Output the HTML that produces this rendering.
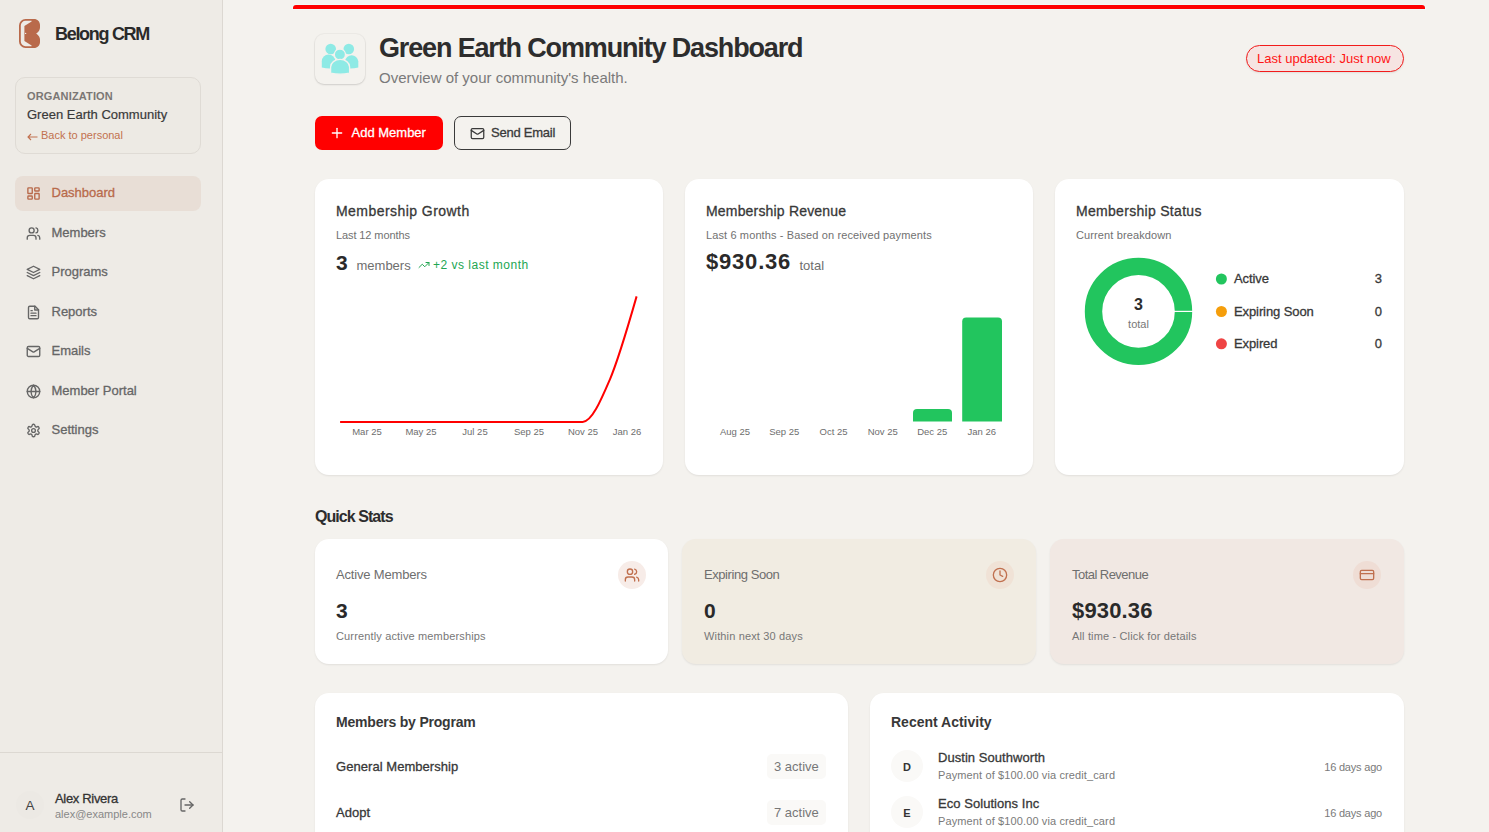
<!DOCTYPE html>
<html><head><meta charset="utf-8">
<style>
*{box-sizing:border-box;margin:0;padding:0}
html,body{width:1489px;height:832px;overflow:hidden}
body{font-family:"Liberation Sans",sans-serif;background:#F4F2EE;color:#2E2E2E;position:relative}
.abs{position:absolute;white-space:nowrap}
#side{position:absolute;left:0;top:0;width:223px;height:832px;background:#EEEBE6;border-right:1px solid #DCD8D2}
.brand{left:55px;top:24px;font-size:18px;font-weight:bold;letter-spacing:-1.3px;color:#2A2A2A}
.org{position:absolute;left:15px;top:77px;width:186px;height:77px;border:1px solid #DFDBD5;border-radius:10px;background:#EDEAE4}
.nav{position:absolute;left:15px;width:186px;height:35px;border-radius:8px}
.nav.active{background:#E8DED6}
.nav svg{position:absolute;left:10.5px;top:10px}
.nav span{-webkit-text-stroke:0.3px currentColor;position:absolute;left:36.5px;top:10px;font-size:13px;line-height:1;color:#666;white-space:nowrap}
.nav.active span{color:#B86A4B}
.card{position:absolute;background:#fff;border-radius:14px;box-shadow:0 1px 2px rgba(0,0,0,0.08)}

.t{position:absolute;white-space:nowrap;line-height:1}
.ct{font-size:14px;color:#383838;letter-spacing:0.3px}
.cs{font-size:11px;color:#717171;letter-spacing:0.12px}
.big{font-size:20px;font-weight:bold;color:#2A2A2A}
.lg{font-size:13px;color:#383838;letter-spacing:-0.1px}
.sl{font-size:13px;color:#6E6E6E;letter-spacing:-0.17px}
.sv{font-size:21px;font-weight:bold;color:#2A2A2A}
.sd{font-size:11px;color:#777;letter-spacing:0.15px}
.bt{font-size:14px;font-weight:bold;color:#383838;letter-spacing:-0.2px}
.pr{font-size:13px;color:#383838;letter-spacing:0.05px}
.ps{font-size:11px;color:#7A7A7A;letter-spacing:0.12px}
.av{width:32px;height:32px;border-radius:50%;background:#FAF9F7;text-align:center;line-height:34px;font-size:11px;font-weight:bold;color:#333}
.m{-webkit-text-stroke:0.3px currentColor}
</style></head><body>
<div id="side">
  <svg class="abs" style="left:19px;top:19px" width="22" height="30" viewBox="0 0 22 30">
    <path d="M14 0.9 H6.5 A5.6 5.6 0 0 0 0.9 6.5 V22.5 A5.6 5.6 0 0 0 6.5 28.1 H14" fill="none" stroke="#B96A4B" stroke-width="1.8"/>
    <path d="M5.4 7 L12.6 2.4 V0 H15 C18.4 0 21 2.6 21 6 V8.4 C21 10.6 19.8 12.6 17.2 14.5 C19.8 16.4 21 18.4 21 20.6 V23 C21 26.4 18.4 29 15 29 H12.6 V26.6 L5.4 22 Z" fill="#B96A4B"/>
    <circle cx="6.6" cy="14.4" r="0.7" fill="#EEEBE6"/>
  </svg>
  <div class="abs brand">Belong CRM</div>
  <div class="org">
    <div class="abs" style="left:11px;top:12px;font-size:11px;font-weight:bold;letter-spacing:0.15px;color:#7A7774">ORGANIZATION</div>
    <div class="abs" style="left:11px;top:29px;font-size:13px;color:#3A3A3A;-webkit-text-stroke:0.2px currentColor">Green Earth Community</div>
    <svg class="abs" style="left:11px;top:55px" width="11" height="8" viewBox="0 0 11 8"><path d="M10.5 4H1M4 1L1 4L4 7" fill="none" stroke="#C2714F" stroke-width="1.1"/></svg><div class="abs" style="left:25px;top:51px;font-size:11px;color:#C2714F">Back to personal</div>
  </div>
  <div class="nav active" style="top:176px">
    <svg width="15" height="15" viewBox="0 0 24 24" fill="none" stroke="#B86A4B" stroke-width="2.2" stroke-linecap="round" stroke-linejoin="round"><rect x="3" y="3" width="7" height="9" rx="1"/><rect x="14" y="3" width="7" height="5" rx="1"/><rect x="14" y="12" width="7" height="9" rx="1"/><rect x="3" y="16" width="7" height="5" rx="1"/></svg>
    <span>Dashboard</span>
  </div>
  <div class="nav" style="top:215.55px">
    <svg width="15" height="15" viewBox="0 0 24 24" fill="none" stroke="#666" stroke-width="2.2" stroke-linecap="round" stroke-linejoin="round"><path d="M16 21v-2a4 4 0 0 0-4-4H6a4 4 0 0 0-4 4v2"/><circle cx="9" cy="7" r="4"/><path d="M22 21v-2a4 4 0 0 0-3-3.87"/><path d="M16 3.13a4 4 0 0 1 0 7.75"/></svg>
    <span>Members</span>
  </div>
  <div class="nav" style="top:255.1px">
    <svg width="15" height="15" viewBox="0 0 24 24" fill="none" stroke="#666" stroke-width="2.2" stroke-linecap="round" stroke-linejoin="round"><path d="M12 2 2 7l10 5 10-5-10-5z"/><path d="m2 17 10 5 10-5"/><path d="m2 12 10 5 10-5"/></svg>
    <span>Programs</span>
  </div>
  <div class="nav" style="top:294.65px">
    <svg width="15" height="15" viewBox="0 0 24 24" fill="none" stroke="#666" stroke-width="2.2" stroke-linecap="round" stroke-linejoin="round"><path d="M14.5 2H6a2 2 0 0 0-2 2v16a2 2 0 0 0 2 2h12a2 2 0 0 0 2-2V7.5L14.5 2z"/><polyline points="14 2 14 8 20 8"/><line x1="16" y1="13" x2="8" y2="13"/><line x1="16" y1="17" x2="8" y2="17"/><line x1="10" y1="9" x2="8" y2="9"/></svg>
    <span>Reports</span>
  </div>
  <div class="nav" style="top:334.2px">
    <svg width="15" height="15" viewBox="0 0 24 24" fill="none" stroke="#666" stroke-width="2.2" stroke-linecap="round" stroke-linejoin="round"><rect x="2" y="4" width="20" height="16" rx="2"/><path d="m22 7-8.97 5.7a1.94 1.94 0 0 1-2.06 0L2 7"/></svg>
    <span>Emails</span>
  </div>
  <div class="nav" style="top:373.75px">
    <svg width="15" height="15" viewBox="0 0 24 24" fill="none" stroke="#666" stroke-width="2.2" stroke-linecap="round" stroke-linejoin="round"><circle cx="12" cy="12" r="10"/><path d="M12 2a14.5 14.5 0 0 0 0 20 14.5 14.5 0 0 0 0-20"/><path d="M2 12h20"/></svg>
    <span>Member Portal</span>
  </div>
  <div class="nav" style="top:413.3px">
    <svg width="15" height="15" viewBox="0 0 24 24" fill="none" stroke="#666" stroke-width="2.2" stroke-linecap="round" stroke-linejoin="round"><path d="M12.22 2h-.44a2 2 0 0 0-2 2v.18a2 2 0 0 1-1 1.73l-.43.25a2 2 0 0 1-2 0l-.15-.08a2 2 0 0 0-2.73.73l-.22.38a2 2 0 0 0 .73 2.73l.15.1a2 2 0 0 1 1 1.72v.51a2 2 0 0 1-1 1.74l-.15.09a2 2 0 0 0-.73 2.73l.22.38a2 2 0 0 0 2.73.73l.15-.08a2 2 0 0 1 2 0l.43.25a2 2 0 0 1 1 1.73V20a2 2 0 0 0 2 2h.44a2 2 0 0 0 2-2v-.18a2 2 0 0 1 1-1.73l.43-.25a2 2 0 0 1 2 0l.15.08a2 2 0 0 0 2.73-.73l.22-.39a2 2 0 0 0-.73-2.73l-.15-.08a2 2 0 0 1-1-1.74v-.5a2 2 0 0 1 1-1.74l.15-.09a2 2 0 0 0 .73-2.73l-.22-.38a2 2 0 0 0-2.73-.73l-.15.08a2 2 0 0 1-2 0l-.43-.25a2 2 0 0 1-1-1.73V4a2 2 0 0 0-2-2z"/><circle cx="12" cy="12" r="3"/></svg>
    <span>Settings</span>
  </div>
  <div class="abs" style="left:0;top:752px;width:222px;height:1px;background:#DCD8D2"></div>
  <div class="abs" style="left:15.5px;top:791px;width:28px;height:28px;border-radius:50%;background:#ECE9E4;font-size:13.5px;color:#444;text-align:center;line-height:30px;padding-left:1px">A</div>
  <div class="abs" style="left:55px;top:790.8px;font-size:13px;color:#333;-webkit-text-stroke:0.3px currentColor;letter-spacing:-0.32px">Alex Rivera</div>
  <div class="abs" style="left:55px;top:808px;font-size:11px;color:#888">alex@example.com</div>
  <svg class="abs" style="left:178.5px;top:797px" width="16" height="16" viewBox="0 0 24 24" fill="none" stroke="#666" stroke-width="2" stroke-linecap="round" stroke-linejoin="round"><path d="M9 21H5a2 2 0 0 1-2-2V5a2 2 0 0 1 2-2h4"/><polyline points="16 17 21 12 16 7"/><line x1="21" y1="12" x2="9" y2="12"/></svg>
</div>


<!-- MAIN -->
<div class="abs" style="left:293px;top:5px;width:1132px;height:4px;background:#FF0000;border-radius:3px 3px 0 0;box-shadow:0 0 0 1px #F0FAF8"></div>

<div class="abs" style="left:315px;top:34px;width:50px;height:50px;border-radius:9px;background:#F4F2EE;box-shadow:0 1px 2px rgba(0,0,0,0.12),0 0 0 1px rgba(0,0,0,0.03)"></div>
<svg class="abs" style="left:315px;top:34px" width="50" height="50" viewBox="0 0 50 50">
  <g fill="#8EEAE5">
    <circle cx="15.7" cy="15" r="5.3"/><path d="M6.8 33.6 V27.3 A6.75 6.8 0 0 1 20.3 27.3 V34.2 Q13.5 35.2 6.8 33.6 Z"/>
    <circle cx="33.8" cy="15" r="5.3"/><path d="M29.9 34.2 V27.3 A6.75 6.8 0 0 1 43.3 27.3 V33.6 Q36.6 35.2 29.9 34.2 Z"/>
  </g>
  <g fill="#8EEAE5" stroke="#F4F2EE" stroke-width="1.3">
    <circle cx="24.9" cy="20.6" r="5.6"/><path d="M15.6 39.2 V33 A9.5 7.6 0 0 1 34.6 33 V39.2 Q25 41.2 15.6 39.2 Z"/>
  </g>
</svg>
<div class="t" style="left:379px;top:34.5px;font-size:27px;font-weight:bold;color:#2D2D2D;letter-spacing:-1.15px">Green Earth Community Dashboard</div>
<div class="t" style="left:379px;top:69.5px;font-size:15px;color:#7A7A7A">Overview of your community's health.</div>

<div class="abs" style="left:1246px;top:45px;width:158px;height:27px;border-radius:14px;border:1px solid #F21B1B;background:#F6E4E2;box-shadow:0 1px 2px rgba(0,0,0,0.08)"></div>
<div class="t" style="left:1257px;top:52px;font-size:13px;color:#FF1414">Last updated: Just now</div>

<div class="abs" style="left:315px;top:116px;width:128px;height:34px;border-radius:7px;background:#FF0000"></div>
<svg class="abs" style="left:329px;top:125px" width="16" height="16" viewBox="0 0 24 24" fill="none" stroke="#fff" stroke-width="2" stroke-linecap="round"><path d="M5 12h14"/><path d="M12 5v14"/></svg>
<div class="t" style="left:351.5px;top:126px;font-size:13px;color:#fff;-webkit-text-stroke:0.3px currentColor">Add Member</div>
<div class="abs" style="left:454px;top:116px;width:117px;height:34px;border-radius:7px;border:1px solid #3A3A3A"></div>
<svg class="abs" style="left:469.5px;top:125.5px" width="15" height="15" viewBox="0 0 24 24" fill="none" stroke="#3A3A3A" stroke-width="2" stroke-linecap="round" stroke-linejoin="round"><rect x="2" y="4" width="20" height="16" rx="2"/><path d="m22 7-8.97 5.7a1.94 1.94 0 0 1-2.06 0L2 7"/></svg>
<div class="t" style="left:491px;top:126px;font-size:13px;color:#3A3A3A;-webkit-text-stroke:0.3px currentColor;letter-spacing:-0.24px">Send Email</div>

<!-- Row 1 cards -->
<div class="card" style="left:315px;top:179px;width:348px;height:296px"></div>
<div class="card" style="left:685px;top:179px;width:348px;height:296px"></div>
<div class="card" style="left:1055px;top:179px;width:349px;height:296px"></div>

<div class="t ct m" style="left:336px;top:203.8px;letter-spacing:0.45px">Membership Growth</div>
<div class="t cs" style="left:336px;top:229.7px;letter-spacing:-0.1px">Last 12 months</div>
<div class="t big" style="left:336px;top:252.2px;font-size:21px">3</div>
<div class="t" style="left:356.5px;top:258.6px;font-size:13px;color:#6E6E6E">members</div>
<svg class="abs" style="left:418px;top:259px" width="12" height="12" viewBox="0 0 24 24" fill="none" stroke="#22A652" stroke-width="2" stroke-linecap="round" stroke-linejoin="round"><polyline points="22 7 13.5 15.5 8.5 10.5 2 17"/><polyline points="16 7 22 7 22 13"/></svg>
<div class="t" style="left:433px;top:259.3px;font-size:12px;color:#22A652;letter-spacing:0.5px">+2 vs last month</div>
<svg class="abs" style="left:0;top:0" width="1489" height="832" viewBox="0 0 1489 832">
  <path d="M340.10,421.90L582.69,421.90C591.68,421.90,600.66,400.98,609.65,380.07C618.63,359.15,627.62,327.77,636.60,296.40" fill="none" stroke="#FF0000" stroke-width="2"/>
  <g font-family="Liberation Sans" font-size="9.5" fill="#6E6E6E" text-anchor="middle">
    <text x="367" y="435.1">Mar 25</text><text x="421" y="435.1">May 25</text><text x="475" y="435.1">Jul 25</text><text x="529" y="435.1">Sep 25</text><text x="583" y="435.1">Nov 25</text><text x="627" y="435.1">Jan 26</text>
  </g>
  <g font-family="Liberation Sans" font-size="9.5" fill="#6E6E6E" text-anchor="middle">
    <text x="735" y="435.1">Aug 25</text><text x="784.2" y="435.1">Sep 25</text><text x="833.5" y="435.1">Oct 25</text><text x="882.7" y="435.1">Nov 25</text><text x="932.2" y="435.1">Dec 25</text><text x="981.8" y="435.1">Jan 26</text>
  </g>
  <path d="M913,421.4V413a4,4 0 0 1 4,-4H948a4,4 0 0 1 4,4V421.4Z" fill="#22C55E"/>
  <path d="M962.2,421.4V321.6a4,4 0 0 1 4,-4H998a4,4 0 0 1 4,4V421.4Z" fill="#22C55E"/>
  <circle cx="1138.5" cy="311.4" r="45" fill="none" stroke="#22C55E" stroke-width="17.4"/>
  <line x1="1174" y1="311.4" x2="1193" y2="311.4" stroke="#fff" stroke-width="1.2"/>
  <circle cx="1221.4" cy="279" r="5.5" fill="#22C55E"/>
  <circle cx="1221.4" cy="311.5" r="5.5" fill="#F59E0B"/>
  <circle cx="1221.4" cy="343.8" r="5.5" fill="#EF4444"/>
</svg>

<div class="t ct m" style="left:706px;top:203.8px;letter-spacing:0.18px">Membership Revenue</div>
<div class="t cs" style="left:706px;top:229.7px">Last 6 months - Based on received payments</div>
<div class="t big" style="left:706px;top:251.4px;font-size:22px;letter-spacing:0.8px">$930.36</div>
<div class="t" style="left:799.5px;top:258.6px;font-size:13px;color:#6E6E6E">total</div>

<div class="t ct m" style="left:1076px;top:203.8px">Membership Status</div>
<div class="t cs" style="left:1076px;top:229.7px">Current breakdown</div>
<div class="t" style="left:1098.5px;width:80px;text-align:center;top:297.4px;font-size:16px;font-weight:bold;color:#2D2D2D">3</div>
<div class="t" style="left:1098.5px;width:80px;text-align:center;top:319.4px;font-size:11px;color:#777">total</div>
<div class="t lg m" style="left:1234px;top:272.2px">Active</div>
<div class="t lg m" style="left:1234px;top:304.6px">Expiring Soon</div>
<div class="t lg m" style="left:1234px;top:337px">Expired</div>
<div class="t lg m" style="left:1282px;width:100px;text-align:right;top:272.2px">3</div>
<div class="t lg m" style="left:1282px;width:100px;text-align:right;top:304.6px">0</div>
<div class="t lg m" style="left:1282px;width:100px;text-align:right;top:337px">0</div>

<!-- Quick stats -->
<div class="t" style="left:315px;top:508.6px;font-size:16px;font-weight:bold;color:#2D2D2D;letter-spacing:-0.95px">Quick Stats</div>
<div class="card sc" style="left:315px;top:539px;width:353px;height:125px"></div>
<div class="card sc" style="left:682px;top:539px;width:354px;height:125px;background:#F1ECE2"></div>
<div class="card sc" style="left:1050px;top:539px;width:354px;height:125px;background:#F1E8E3"></div>

<div class="t sl" style="left:336px;top:567.8px">Active Members</div>
<div class="t sv" style="left:336px;top:600.1px">3</div>
<div class="t sd" style="left:336px;top:630.5px">Currently active memberships</div>
<div class="abs" style="left:618px;top:561px;width:28px;height:28px;border-radius:50%;background:#F7ECE8"></div>
<svg class="abs" style="left:624px;top:567px" width="16" height="16" viewBox="0 0 24 24" fill="none" stroke="#C0704F" stroke-width="2" stroke-linecap="round" stroke-linejoin="round"><path d="M16 21v-2a4 4 0 0 0-4-4H6a4 4 0 0 0-4 4v2"/><circle cx="9" cy="7" r="4"/><path d="M22 21v-2a4 4 0 0 0-3-3.87"/><path d="M16 3.13a4 4 0 0 1 0 7.75"/></svg>

<div class="t sl" style="left:704px;top:567.8px;letter-spacing:-0.43px">Expiring Soon</div>
<div class="t sv" style="left:704px;top:600.1px">0</div>
<div class="t sd" style="left:704px;top:630.5px">Within next 30 days</div>
<div class="abs" style="left:986px;top:561px;width:28px;height:28px;border-radius:50%;background:#F0E2D6"></div>
<svg class="abs" style="left:992px;top:567px" width="16" height="16" viewBox="0 0 24 24" fill="none" stroke="#C0704F" stroke-width="2" stroke-linecap="round" stroke-linejoin="round"><circle cx="12" cy="12" r="10"/><polyline points="12 6 12 12 16 14"/></svg>

<div class="t sl" style="left:1072px;top:567.8px;letter-spacing:-0.54px">Total Revenue</div>
<div class="t sv" style="left:1072px;top:599.6px;font-size:22px;letter-spacing:0.15px">$930.36</div>
<div class="t sd" style="left:1072px;top:630.5px">All time - Click for details</div>
<div class="abs" style="left:1353px;top:561px;width:28px;height:28px;border-radius:50%;background:#EFDDD5"></div>
<svg class="abs" style="left:1359px;top:567px" width="16" height="16" viewBox="0 0 24 24" fill="none" stroke="#C0704F" stroke-width="2" stroke-linecap="round" stroke-linejoin="round"><rect x="2" y="5" width="20" height="14" rx="2"/><line x1="2" y1="10" x2="22" y2="10"/></svg>

<!-- bottom cards -->
<div class="card" style="left:315px;top:693px;width:533px;height:200px"></div>
<div class="card" style="left:870px;top:693px;width:534px;height:200px"></div>
<div class="t bt" style="left:336px;top:715.2px">Members by Program</div>
<div class="t pr m" style="left:336px;top:759.8px">General Membership</div>
<div class="t pr m" style="left:336px;top:805.8px">Adopt</div>
<div class="abs" style="left:767px;top:754px;width:59px;height:25px;border-radius:5px;background:#FAF9F7"></div>
<div class="abs" style="left:767px;top:800px;width:59px;height:25px;border-radius:5px;background:#FAF9F7"></div>
<div class="t" style="left:774px;top:760px;font-size:13px;color:#777">3 active</div>
<div class="t" style="left:774px;top:806px;font-size:13px;color:#777">7 active</div>

<div class="t bt" style="left:891px;top:715px;letter-spacing:0px">Recent Activity</div>
<div class="abs av" style="left:891px;top:750px">D</div>
<div class="abs av" style="left:891px;top:796px">E</div>
<div class="t pr m" style="left:938px;top:751.1px">Dustin Southworth</div>
<div class="t ps" style="left:938px;top:769.6px">Payment of $100.00 via credit_card</div>
<div class="t pr m" style="left:938px;top:797.1px">Eco Solutions Inc</div>
<div class="t ps" style="left:938px;top:815.6px">Payment of $100.00 via credit_card</div>
<div class="t ps" style="left:1282px;width:100px;text-align:right;top:761.6px;letter-spacing:-0.2px">16 days ago</div>
<div class="t ps" style="left:1282px;width:100px;text-align:right;top:807.6px;letter-spacing:-0.2px">16 days ago</div>
</body></html>
